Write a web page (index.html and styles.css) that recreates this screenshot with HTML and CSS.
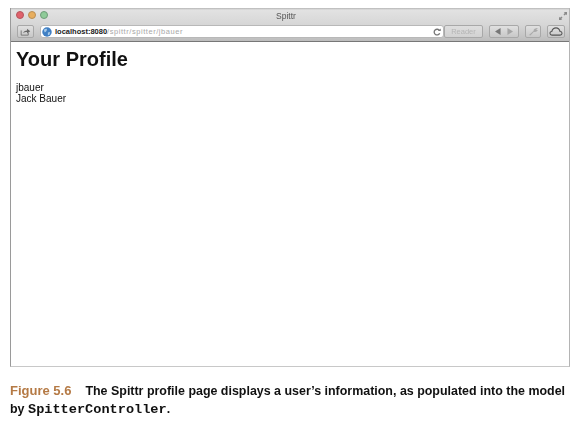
FILE: index.html
```html
<!DOCTYPE html>
<html lang="en">

<head>
    <meta charset="UTF-8">
    <meta name="viewport" content="width=device-width, initial-scale=1.0">
    <title>Figure 5.6</title>
    <link rel="stylesheet" href="styles.css">
</head>

<body>
    <div class="window">
        <div class="titlebar">
            <div class="lights">
                <span class="light light-red"></span>
                <span class="light light-yellow"></span>
                <span class="light light-green"></span>
            </div>
            <div class="window-title">Spittr</div>
            <svg class="resize" width="8" height="8" viewBox="0 0 10 10">
                <path d="M6 0h4v4l-1.300-1.300-1.700 1.700-1.400-1.400 1.700-1.700z" fill="#8a8a8a"></path>
                <path d="M4 10h-4v-4l1.300 1.300 1.700-1.700 1.400 1.400-1.700 1.700z" fill="#8a8a8a"></path>
            </svg>
        </div>
        <div class="toolbar">
            <div class="btn btn-share">
                <svg width="11" height="8" viewBox="0 0 14 10">
                    <path d="M1.500 3v6h9V6" fill="none" stroke="#666" stroke-width="1"></path>
                    <path d="M4 6.500c.5-2.500 2.500-3.500 5-3.500V1l4 3-4 3V5c-2 0-3.500.3-5 1.500z" fill="#666"></path>
                </svg>
            </div>
            <div class="address">
                <svg class="globe" width="10" height="10" viewBox="0 0 11 11">
                    <circle cx="5.500" cy="5.500" r="5.200" fill="#3f7fc4"></circle>
                    <path d="M2 3c1.500-1 2.500-1.200 3.500-.8L5 4.500 3 6zM6.500 6l2.500-.5-.8 3-1.700.5z" fill="#a9cbe8"></path>
                </svg>
                <span class="url"><b>localhost:8080</b>/spittr/spitter/jbauer</span>
                <svg class="reload" width="8" height="8" viewBox="0 0 9 9">
                    <path d="M7.300 3A3.200 3.200 0 1 0 7.500 5.800" fill="none" stroke="#777" stroke-width="1.500"></path>
                    <path d="M5.500 3.500h3.200V.5z" fill="#777"></path>
                </svg>
            </div>
            <div class="btn btn-reader">Reader</div>
            <div class="btn btn-nav">
                <svg width="6" height="7" viewBox="0 0 7 8"><path d="M6.500 0v8L0 4z" fill="#777"></path></svg>
                <svg width="6" height="7" viewBox="0 0 7 8"><path d="M.5 0v8L7 4z" fill="#a5a5a5"></path></svg>
            </div>
            <div class="btn btn-tool">
                <svg width="11" height="9" viewBox="0 0 12 10">
                    <path d="M1 9l5-4.500C6 2 8 1 11 1L9 3l2 1c-1.500 1.500-3 1.800-4.500 1.300L2.500 9.500z" fill="#aaa"></path>
                </svg>
            </div>
            <div class="btn btn-cloud">
                <svg width="14" height="9" viewBox="0 0 15 10">
                    <path d="M3 9C1.500 9 .8 8 .8 7c0-1.200 1-2 2-2C3.500 2.500 5.500 1 7.500 1s3.800 1.500 4.500 4c1.300 0 2.200.8 2.200 2s-.9 2-2.200 2z" fill="none" stroke="#555" stroke-width="1.200"></path>
                </svg>
            </div>
        </div>
        <div class="page">
            <h1>Your Profile</h1>
            <p>jbauer<br>Jack Bauer</p>
        </div>
    </div>
    <p class="caption"><span class="fig">Figure 5.6</span>The Spittr profile page displays a user’s information, as populated into the model by <code>SpitterController</code>.</p>
</body>

</html>
```

FILE: styles.css
```css
body {
    margin: 0;
    background: #fff;
    font-family: "Liberation Sans", Arial, sans-serif;
    filter: blur(0.5px);
}

.window {
    width: 560px;
    height: 359px;
    margin: 8px 0 0 10px;
    display: flex;
    flex-direction: column;
    border: 1px solid #b4b4b4;
    border-bottom-color: #c8c8c8;
    border-top: 0;
    border-left-color: #9a9a9a;
    box-sizing: border-box;
}

.titlebar {
    height: 17px;
    display: flex;
    align-items: center;
    position: relative;
    box-sizing: border-box;
    padding: 0 0 3px 5px;
    background: linear-gradient(#b5b5b5 0, #e2e2e2 2px, #d6d6d6);
}

.lights {
    display: flex;
    gap: 4px;
}

.light {
    width: 8px;
    height: 8px;
    border-radius: 50%;
    box-sizing: border-box;
    border: 1px solid #8a8a8a;
}

.light-red {
    background: #e0626c;
    border-color: #b5555c;
}

.light-yellow {
    background: #e8ae5e;
    border-color: #b98e55;
}

.light-green {
    background: #8fcb99;
    border-color: #6f9c78;
}

.window-title {
    flex: 1;
    text-align: center;
    font-size: 8.500px;
    color: #555;
    padding: 1px 45px 0 0;
}

.resize {
    position: absolute;
    right: 2px;
    top: 4px;
}

.toolbar {
    height: 16px;
    display: flex;
    align-items: flex-start;
    gap: 6px;
    padding: 0 4px 0 6px;
    background: linear-gradient(#d6d6d6, #bdbdbd);
    border-bottom: 1px solid #777;
    box-shadow: 0 1px 0 #cfcfcf;
}

.btn {
    height: 13px;
    display: flex;
    align-items: center;
    justify-content: center;
    box-sizing: border-box;
    border: 1px solid #a8a8a8;
    border-radius: 2px;
    background: linear-gradient(#e0e0e0, #c8c8c8);
}

.btn-share {
    width: 17px;
}

.address {
    flex: 1;
    height: 13px;
    display: flex;
    align-items: center;
    box-sizing: border-box;
    padding: 0 2px 0 1px;
    background: #fff;
    border: 1px solid #b8b8b8;
    border-radius: 3px;
    font-size: 7.500px;
    color: #a8a8a8;
}

.globe {
    margin-right: 3px;
}

.url {
    flex: 1;
    letter-spacing: .55px;
}

.url b {
    color: #222;
    letter-spacing: 0;
}

.btn-reader {
    width: 39px;
    margin-left: -6px;
    font-size: 7.500px;
    color: #b5b5b5;
    background: linear-gradient(#dedede, #d2d2d2);
}

.btn-nav {
    width: 30px;
    gap: 6px;
}

.btn-tool {
    width: 16px;
}

.btn-cloud {
    width: 18px;
}

.page {
    flex: 1;
    padding: 0 5px;
    background: #fff;
    color: #111;
}

.page h1 {
    margin: 4px 0 10px;
    font-size: 20px;
    line-height: 26px;
    font-weight: bold;
}

.page p {
    margin: 0;
    font-size: 10px;
    line-height: 11px;
}

.caption {
    width: 560px;
    margin: 15px 0 0 10px;
    font-size: 12.450px;
    line-height: 18px;
    font-weight: bold;
    color: #111;
}

.fig {
    color: #b57a45;
    font-size: 13px;
    margin-right: 14px;
}

.caption code {
    font-family: "Liberation Mono", monospace;
    font-size: 13.600px;
    line-height: 1;
}
```
